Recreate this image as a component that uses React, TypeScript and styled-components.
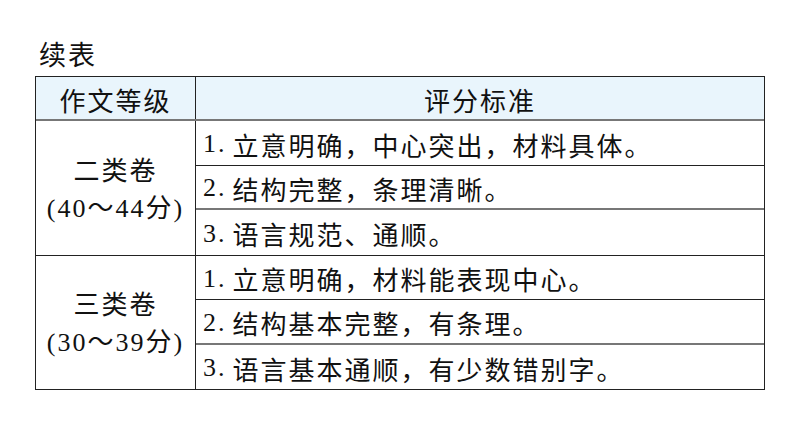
import React from "react";
import styled, { createGlobalStyle } from "styled-components";

const Global = createGlobalStyle`
  html, body { margin: 0; padding: 0; background: #fff; }
  body { font-family: "Liberation Serif", "Noto Sans CJK SC", serif; color: #111; }
`;

const Page = styled.div`
  width: 794px;
  height: 447px;
  box-sizing: border-box;
  padding: 40px 0 0 35px;
`;

const Title = styled.div`
  font-size: 27px;
  line-height: 32px;
  letter-spacing: 2px;
  padding-left: 4px;
  height: 36px;
`;

const Table = styled.div`
  width: 730px;
  box-sizing: border-box;
  border: 1px solid #222;
  font-size: 26px;
  letter-spacing: 2px;
`;

const HeaderRow = styled.div`
  display: grid;
  grid-template-columns: 160px 1fr;
  height: 44px;
  background: #e9f5fc;
  border-bottom: 2px solid #777;
  box-sizing: border-box;
`;

const HeadCell = styled.div<{ $divider?: boolean }>`
  display: flex;
  align-items: center;
  justify-content: center;
  padding-top: 2px;
  border-right: ${(p) => (p.$divider ? "1px solid #222" : "none")};
`;

const Group = styled.div<{ $last?: boolean }>`
  display: grid;
  grid-template-columns: 160px 1fr;
  border-bottom: ${(p) => (p.$last ? "none" : "1px solid #222")};
`;

const LevelCell = styled.div`
  display: flex;
  flex-direction: column;
  align-items: center;
  justify-content: center;
  border-right: 1px solid #222;
  line-height: 37px;
  padding-top: 4px;
`;

const Criteria = styled.div`
  display: flex;
  flex-direction: column;
`;

const CriterionRow = styled.div<{ $line: "dark" | "gray" | "none" }>`
  height: 44.5px;
  box-sizing: border-box;
  display: flex;
  align-items: center;
  padding: 3px 0 0 7px;
  border-bottom: ${(p) =>
    p.$line === "dark" ? "1px solid #222" : p.$line === "gray" ? "2px solid #777" : "none"};
`;

const Num = styled.span`
  margin-right: 6px;
`;

const groups = [
  {
    level: "二类卷",
    range: "(40～44分)",
    items: ["立意明确，中心突出，材料具体。", "结构完整，条理清晰。", "语言规范、通顺。"],
  },
  {
    level: "三类卷",
    range: "(30～39分)",
    items: ["立意明确，材料能表现中心。", "结构基本完整，有条理。", "语言基本通顺，有少数错别字。"],
  },
];

const lines: ("dark" | "gray" | "none")[] = ["dark", "gray", "none"];

export default function App() {
  return (
    <>
      <Global />
      <Page>
        <Title>续表</Title>
        <Table>
          <HeaderRow>
            <HeadCell $divider>作文等级</HeadCell>
            <HeadCell>评分标准</HeadCell>
          </HeaderRow>
          {groups.map((g, gi) => (
            <Group key={g.level} $last={gi === groups.length - 1}>
              <LevelCell>
                <div>{g.level}</div>
                <div>{g.range}</div>
              </LevelCell>
              <Criteria>
                {g.items.map((t, i) => (
                  <CriterionRow key={t} $line={lines[i]}>
                    <Num>{i + 1}.</Num>
                    {t}
                  </CriterionRow>
                ))}
              </Criteria>
            </Group>
          ))}
        </Table>
      </Page>
    </>
  );
}
